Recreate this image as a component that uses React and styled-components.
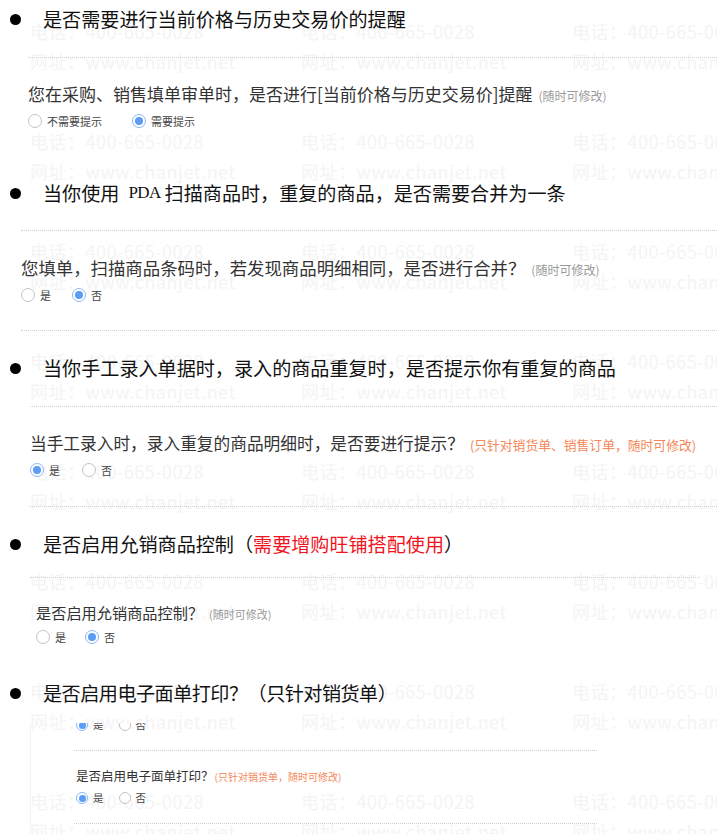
import React from 'react'
import styled, { createGlobalStyle } from 'styled-components'

const GlobalStyle = createGlobalStyle`
  body {
    margin: 0;
    background: #fff;
    font-family: "Noto Sans CJK SC", "Noto Sans", sans-serif;
  }
`

const marks = Array.from({ length: 24 })

const App = () => {
  return (
    <Page>
      <GlobalStyle />
      <Watermark>
        {marks.map((_, i) => (
          <Mark key={i}>
            <div>电话：400-665-0028</div>
            <div>网址：www.chanjet.net</div>
          </Mark>
        ))}
      </Watermark>

      <Content>
        <Heading $mt={0}>
          <Bullet />
          是否需要进行当前价格与历史交易价的提醒
        </Heading>
        <Divider $mt={24} $left={28} />
        <Question $mt={24} $left={28} $size={17}>
          您在采购、销售填单审单时，是否进行[当前价格与历史交易价]提醒
          <Note $size={12}>(随时可修改)</Note>
        </Question>
        <RadioRow $mt={7} $left={28} $gap={30}>
          <Option><Radio />不需要提示</Option>
          <Option><Radio $checked />需要提示</Option>
        </RadioRow>

        <Heading $mt={50}>
          <Bullet />
          当你使用<Latin>PDA</Latin>扫描商品时，重复的商品，是否需要合并为一条
        </Heading>
        <Divider $mt={23} $left={21} />
        <Question $mt={25} $left={21} $size={17.4}>
          您填单，扫描商品条码时，若发现商品明细相同，是否进行合并？
          <Note $size={12}>(随时可修改)</Note>
        </Question>
        <RadioRow $mt={7} $left={21} $gap={21}>
          <Option><Radio />是</Option>
          <Option><Radio $checked />否</Option>
        </RadioRow>
        <Divider $mt={27} $left={21} />

        <Heading $mt={23}>
          <Bullet />
          当你手工录入单据时，录入的商品重复时，是否提示你有重复的商品
        </Heading>
        <Divider $mt={24} $left={30} />
        <Question $mt={24} $left={30} $size={16.7}>
          当手工录入时，录入重复的商品明细时，是否要进行提示？
          <Note $size={12.8} $orange>(只针对销货单、销售订单，随时可修改)</Note>
        </Question>
        <RadioRow $mt={7} $left={30} $gap={22}>
          <Option><Radio $checked />是</Option>
          <Option><Radio />否</Option>
        </RadioRow>
        <Divider $mt={28} $left={30} />

        <Heading $mt={23}>
          <Bullet />
          是否启用允销商品控制（<Red>需要增购旺铺搭配使用</Red>）
        </Heading>
        <Divider $mt={19} $left={30} $right={17} />
        <Question $mt={22} $left={36} $size={15.2}>
          是否启用允销商品控制？
          <Note $size={11}>(随时可修改)</Note>
        </Question>
        <RadioRow $mt={5} $left={36} $gap={19}>
          <Option><Radio />是</Option>
          <Option><Radio $checked />否</Option>
        </RadioRow>

        <Heading $mt={34} $tight>
          <Bullet />
          是否启用电子面单打印？（只针对销货单）
        </Heading>
        <Shot>
          <RadioRow $mt={-4} $left={0} $gap={15} $small>
            <Option><Radio $checked $small />是</Option>
            <Option><Radio $small />否</Option>
          </RadioRow>
          <Divider $mt={19} $left={-2} $right={120} />
          <Question $mt={16} $left={0} $size={12.5} $lh={18}>
            是否启用电子面单打印？
            <Note $size={10} $orange $gap={1}>(只针对销货单，随时可修改)</Note>
          </Question>
          <RadioRow $mt={7} $left={0} $gap={15} $small>
            <Option><Radio $checked $small />是</Option>
            <Option><Radio $small />否</Option>
          </RadioRow>
          <Divider $mt={19} $left={-2} $right={120} />
        </Shot>
      </Content>
    </Page>
  )
}

const Page = styled.div`
  position: relative;
  width: 717px;
  height: 834px;
  overflow: hidden;
  padding-top: 5px;
  box-sizing: border-box;
`

const Watermark = styled.div`
  position: absolute;
  inset: 0;
  z-index: 0;
  pointer-events: none;
  display: grid;
  grid-template-columns: repeat(3, 271px);
  grid-auto-rows: 110px;
  padding: 16px 0 0 30px;
  color: #f4f4f4;
  font-size: 18px;
  letter-spacing: 0.5px;
  line-height: 30px;
  white-space: nowrap;
`

const Mark = styled.div``

const Content = styled.div`
  position: relative;
  z-index: 1;
`

const Heading = styled.div`
  display: flex;
  align-items: center;
  height: 28px;
  margin-top: ${p => p.$mt}px;
  font-size: 19.1px;
  letter-spacing: ${p => (p.$tight ? -0.5 : 0)}px;
  color: #111;
  white-space: nowrap;
`

const Bullet = styled.span`
  width: 11px;
  height: 11px;
  border-radius: 50%;
  background: #000;
  margin: 0 22px 0 10px;
  flex: none;
`

const Latin = styled.span`
  font-family: "Liberation Serif", serif;
  font-size: 17px;
  letter-spacing: -0.6px;
  margin: 0 4px 0 9px;
`

const Red = styled.span`
  color: #f0141e;
`

const Divider = styled.div`
  margin-top: ${p => p.$mt}px;
  margin-left: ${p => p.$left}px;
  margin-right: ${p => p.$right || 0}px;
  border-top: 1px dotted #cfcfcf;
`

const Question = styled.div`
  height: ${p => p.$lh || 24}px;
  margin-top: ${p => p.$mt}px;
  margin-left: ${p => p.$left}px;
  font-size: ${p => p.$size}px;
  line-height: ${p => p.$lh || 24}px;
  color: #333;
  white-space: nowrap;
`

const Note = styled.span`
  margin-left: ${p => (p.$gap != null ? p.$gap : 6)}px;
  font-size: ${p => p.$size}px;
  line-height: 1;
  color: ${p => (p.$orange ? '#f5875a' : '#9a9a9a')};
`

const RadioRow = styled.div`
  display: flex;
  align-items: center;
  gap: ${p => p.$gap}px;
  height: ${p => (p.$small ? 12 : 16)}px;
  margin-top: ${p => p.$mt}px;
  margin-left: ${p => p.$left}px;
  font-size: ${p => (p.$small ? 10.5 : 11)}px;
  line-height: 1;
  color: #444;
`

const Option = styled.label`
  display: flex;
  align-items: center;
  gap: 5px;
`

const Radio = styled.span`
  display: inline-flex;
  align-items: center;
  justify-content: center;
  box-sizing: border-box;
  width: ${p => (p.$small ? 12 : 14)}px;
  height: ${p => (p.$small ? 12 : 14)}px;
  border-radius: 50%;
  background: #fff;
  border: 1px solid ${p => (p.$checked ? '#8ab8f5' : '#c4c4c4')};
  &::after {
    content: "";
    display: ${p => (p.$checked ? 'block' : 'none')};
    width: ${p => (p.$small ? 7 : 8)}px;
    height: ${p => (p.$small ? 7 : 8)}px;
    border-radius: 50%;
    background: #5b9cf4;
  }
`

const Shot = styled.div`
  margin: 16px 0 0 30px;
  padding-left: 45px;
  height: 140px;
  overflow: hidden;
  border-left: 1px solid #f3f3f3;
`

export default App
